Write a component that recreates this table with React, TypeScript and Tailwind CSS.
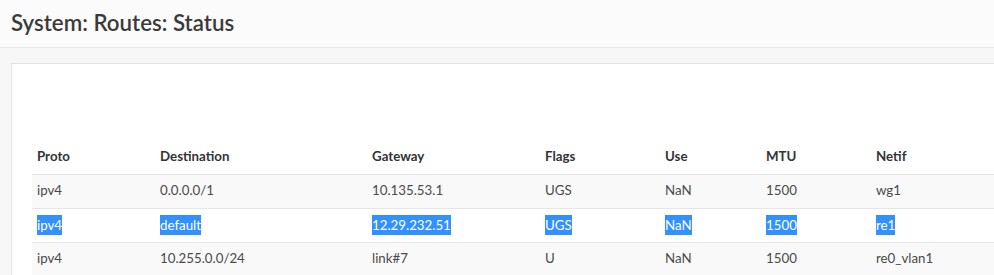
import React from "react";

const cols = [123, 212, 173, 120, 101, 110, 200];
const headers = ["Proto", "Destination", "Gateway", "Flags", "Use", "MTU", "Netif"];
const rows = [
  ["ipv4", "0.0.0.0/1", "10.135.53.1", "UGS", "NaN", "1500", "wg1"],
  ["ipv4", "default", "12.29.232.51", "UGS", "NaN", "1500", "re1"],
  ["ipv4", "10.255.0.0/24", "link#7", "U", "NaN", "1500", "re0_vlan1"],
];

export default function App() {
  return (
    <div
      className="w-[994px] h-[275px] overflow-hidden bg-[#f7f7f7]"
      style={{ fontFamily: "Lato, 'Noto Sans', sans-serif" }}
    >
      <div className="h-[48px] bg-[#fbfbfb] border-b border-[#e6e6e6] flex items-center px-[11px]">
        <h1 className="text-[22.3px] font-semibold text-[#3a3a3a] leading-none">System: Routes: Status</h1>
      </div>
      <div className="pl-[11px] pt-[15px]">
        <div className="w-[1100px] bg-white border border-[#e4e4e4] pl-[20px] pt-[76px]">
          <table className="table-fixed border-collapse text-[13.3px]">
            <colgroup>
              {cols.map((w, i) => (
                <col key={i} style={{ width: w }} />
              ))}
            </colgroup>
            <thead>
              <tr className="h-[34px] border-b border-[#e6e6e6]">
                {headers.map((h) => (
                  <th key={h} className="text-left font-bold text-[#333] px-[5px] align-middle">
                    {h}
                  </th>
                ))}
              </tr>
            </thead>
            <tbody>
              {rows.map((r, ri) => (
                <tr
                  key={ri}
                  className={
                    "h-[34px] border-b border-[#e6e6e6] " + (ri % 2 === 0 ? "bg-[#f9f9f9]" : "bg-white")
                  }
                >
                  {r.map((c, ci) => (
                    <td key={ci} className="px-[5px] text-[#4a4a4a] align-middle">
                      {ri === 1 ? (
                        <span className="inline-block align-middle leading-[20px] bg-[#3390ff] text-white">{c}</span>
                      ) : (
                        c
                      )}
                    </td>
                  ))}
                </tr>
              ))}
            </tbody>
          </table>
        </div>
      </div>
    </div>
  );
}
